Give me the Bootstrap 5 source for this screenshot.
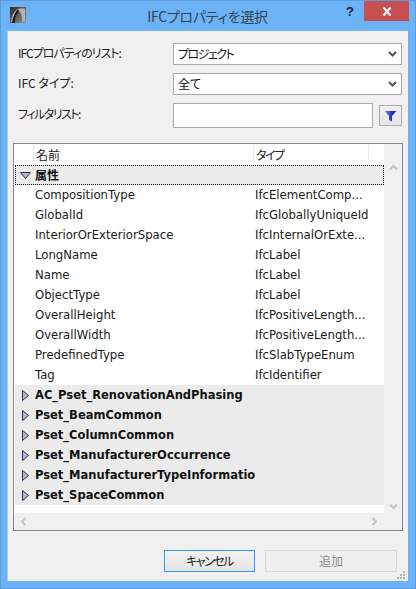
<!DOCTYPE html>
<html lang="ja">
<head>
<meta charset="utf-8">
<title>IFCプロパティを選択</title>
<link rel="stylesheet" href="https://cdn.jsdelivr.net/npm/bootstrap@5.3.0/dist/css/bootstrap.min.css">
<style>
html,body{height:100%;margin:0;overflow:hidden}
body{background:#6bb2f6;font-family:"DejaVu Sans","Noto Sans CJK JP",sans-serif;font-size:11.7px;color:#1a1a1a;line-height:1.2}
.dlg-cjk{font-family:"Noto Sans CJK JP",sans-serif;font-feature-settings:"palt"}
.dlg-kana{letter-spacing:-1.5px}
.dlg-kana1{letter-spacing:-1px}
.dlg-frame{height:589px;width:416px;border:1px solid #5b9bd8;border-top-color:#5d9ddc}
.dlg-title{height:30px;position:relative}
.dlg-logo{margin:6px 0 0 9px;width:16px;height:16px;display:block}
.dlg-name{flex:1;text-align:center;font-size:14px;color:#39424c;padding-top:7px;padding-left:48px;line-height:17px;letter-spacing:-.3px}
.dlg-help{width:18px;font-weight:700;font-size:13px;padding-top:3px;color:#222;font-family:"Liberation Sans",sans-serif;text-align:center;margin-right:5px}
.dlg-close{width:45px;height:20px;background:#c75050;margin-right:6px;display:flex;align-items:center;justify-content:center}
.dlg-client{width:401px;height:550px;margin-left:6px;background:#f0f0f0;border-left:1px solid #a6cdf4;position:relative;padding:12px 6px 0 10px}
.dlg-row{height:22px;margin-bottom:8px}
.dlg-row.tall{height:25px;margin-bottom:15px}
.dlg-label{width:155px;font-size:12px;color:#222;padding-bottom:2px}
.form-select.dlg-sel{width:229px;height:22px;border-radius:0;border:1px solid #a9a9a9;padding:0 20px 0 4px;font-size:12px;color:#111;background-color:#fff;background-position:right 4px center;background-size:9px 7px;background-image:url("data:image/svg+xml,%3Csvg xmlns='http://www.w3.org/2000/svg' viewBox='0 0 9 7'%3E%3Cpath d='M1 1l3.500 3.500L8 1' fill='none' stroke='%23555' stroke-width='2'/%3E%3C/svg%3E")}
.form-control.dlg-input{width:200px;height:25px;border-radius:0;border:1px solid #a9a9a9;padding:0 4px;background:#fff}
.btn.dlg-filter{width:23px;height:21px;margin:0 0 0 6px;padding:0;border-radius:0;border:1px solid #acacac;background:linear-gradient(#f1f1f1,#e6e6e6);display:flex;align-items:center;justify-content:center}
.dlg-panel{width:390px;height:388px;margin-left:-5px;border:1px solid #828790;background:#fff;display:grid;grid-template-columns:370px 18px;grid-template-rows:369px 17px}
.dlg-list{padding:1px 0 0 1px;overflow:hidden}
.dlg-head{height:19px;display:flex;color:#222;margin-bottom:1px;font-size:12px}
.dlg-head span{display:block;padding:2px 0 0 2px;border-right:1px solid #e6ecf5;line-height:15px}
.dlg-h0{width:19px}.dlg-h1{width:220px}.dlg-h2{width:115px}
.dlg-rw{height:20px;display:flex;align-items:center;white-space:nowrap}
.dlg-rw .c0{width:20px;flex:none;display:flex;justify-content:center;padding-left:1px}
.dlg-rw .c1{width:220px;flex:none;overflow:hidden;height:20px;line-height:20px}
.dlg-grp{background:#ebebeb;font-weight:700;color:#111;font-size:11.5px}
.dlg-grp.active-row{outline:1px dotted #111;outline-offset:-1px;font-size:12px}
.dlg-sbv{background:#f0f0f0;display:flex;flex-direction:column;justify-content:space-between;align-items:center;padding:20px 0 3px}
.dlg-sbh{background:#f0f0f0;display:flex;justify-content:space-between;align-items:center;padding:0 6px}
.dlg-corner{background:#f0f0f0}
.dlg-foot{margin-top:19px;margin-left:146px;gap:10px}
.btn.dlg-btn{height:22px;border-radius:0;padding:0;font-size:12px;line-height:20px}
.btn.dlg-cancel{width:91px;border:1px solid #3399ff;background:linear-gradient(#f2f2f2,#e5e5e5);color:#222}
.btn.dlg-add{width:132px;border:1px solid #d9d9d9;background:#efefef;color:#8b8b8b;opacity:1}
.dlg-grip{position:absolute;right:2px;bottom:1px;display:block}
</style>
</head>
<body>
<div class="dlg-frame">
  <div class="dlg-title d-flex align-items-start">
    <svg class="dlg-logo" viewBox="0 0 16 16"><defs><linearGradient id="lg" x1="0" y1="0" x2="1" y2="1"><stop offset="0" stop-color="#2b2b2b"/><stop offset="1" stop-color="#8e8e8e"/></linearGradient></defs><rect width="16" height="16" fill="url(#lg)"/><path d="M9 1.500h6V15h-2.500C12 9 11 5 8.500 4 6 5 4 10 3.500 15H1C2 8 5 3 9 1.500z" fill="#b4b4b4"/><path d="M8 2.500C5 5 3 10 2 16h2.500C5 10 6.500 6 9 3.500z" fill="#111"/></svg>
    <div class="dlg-name dlg-cjk">IFCプロパティを選択</div>
    <div class="dlg-help">?</div>
    <div class="dlg-close"><svg width="10" height="9" viewBox="0 0 10 9"><path d="M1.500.5l7 8M8.500.5l-7 8" stroke="#fff" stroke-width="2"/></svg></div>
  </div>
  <div class="dlg-client">
    <div class="dlg-row d-flex align-items-center"><div class="dlg-label dlg-cjk dlg-kana1">IFCプロパティのリスト:</div><select class="form-select dlg-sel dlg-cjk dlg-kana"><option>プロジェクト</option></select></div>
    <div class="dlg-row d-flex align-items-center"><div class="dlg-label dlg-cjk">IFC タイプ:</div><select class="form-select dlg-sel dlg-cjk"><option>全て</option></select></div>
    <div class="dlg-row tall d-flex align-items-center"><div class="dlg-label dlg-cjk dlg-kana">フィルタリスト:</div><input class="form-control dlg-input" type="text"><button class="btn dlg-filter" type="button"><svg width="13" height="12" viewBox="0 0 13 12"><defs><linearGradient id="fg" x1="0" x2="1"><stop offset="0" stop-color="#8c96e8"/><stop offset=".6" stop-color="#1c2fc4"/><stop offset="1" stop-color="#1a2aa8"/></linearGradient></defs><path d="M.5 1h12L8 6v5.500L5 10V6z" fill="url(#fg)"/></svg></button></div>
    <div class="dlg-panel">
      <div class="dlg-list">
        <div class="dlg-head dlg-cjk"><span class="dlg-h0"></span><span class="dlg-h1">名前</span><span class="dlg-h2 dlg-kana">タイプ</span></div>
        <div class="dlg-rw dlg-grp active-row"><span class="c0"><svg width="11" height="7" viewBox="0 0 11 7"><path d="M.5.5h10L5.500 6.500z" fill="#b5b0ee" stroke="#333"/></svg></span><span class="c1 dlg-cjk">属性</span></div>
        <div class="dlg-rw"><span class="c0"></span><span class="c1">CompositionType</span><span class="c2">IfcElementComp...</span></div>
        <div class="dlg-rw"><span class="c0"></span><span class="c1">GlobalId</span><span class="c2">IfcGloballyUniqueId</span></div>
        <div class="dlg-rw"><span class="c0"></span><span class="c1">InteriorOrExteriorSpace</span><span class="c2">IfcInternalOrExte...</span></div>
        <div class="dlg-rw"><span class="c0"></span><span class="c1">LongName</span><span class="c2">IfcLabel</span></div>
        <div class="dlg-rw"><span class="c0"></span><span class="c1">Name</span><span class="c2">IfcLabel</span></div>
        <div class="dlg-rw"><span class="c0"></span><span class="c1">ObjectType</span><span class="c2">IfcLabel</span></div>
        <div class="dlg-rw"><span class="c0"></span><span class="c1">OverallHeight</span><span class="c2">IfcPositiveLength...</span></div>
        <div class="dlg-rw"><span class="c0"></span><span class="c1">OverallWidth</span><span class="c2">IfcPositiveLength...</span></div>
        <div class="dlg-rw"><span class="c0"></span><span class="c1">PredefinedType</span><span class="c2">IfcSlabTypeEnum</span></div>
        <div class="dlg-rw"><span class="c0"></span><span class="c1">Tag</span><span class="c2">IfcIdentifier</span></div>
        <div class="dlg-rw dlg-grp"><span class="c0"><svg width="7" height="11" viewBox="0 0 7 11"><path d="M.5.5v10l6-5z" fill="#b5b0ee" stroke="#333"/></svg></span><span class="c1">AC_Pset_RenovationAndPhasing</span></div>
        <div class="dlg-rw dlg-grp"><span class="c0"><svg width="7" height="11" viewBox="0 0 7 11"><path d="M.5.5v10l6-5z" fill="#b5b0ee" stroke="#333"/></svg></span><span class="c1">Pset_BeamCommon</span></div>
        <div class="dlg-rw dlg-grp"><span class="c0"><svg width="7" height="11" viewBox="0 0 7 11"><path d="M.5.5v10l6-5z" fill="#b5b0ee" stroke="#333"/></svg></span><span class="c1">Pset_ColumnCommon</span></div>
        <div class="dlg-rw dlg-grp"><span class="c0"><svg width="7" height="11" viewBox="0 0 7 11"><path d="M.5.5v10l6-5z" fill="#b5b0ee" stroke="#333"/></svg></span><span class="c1">Pset_ManufacturerOccurrence</span></div>
        <div class="dlg-rw dlg-grp"><span class="c0"><svg width="7" height="11" viewBox="0 0 7 11"><path d="M.5.5v10l6-5z" fill="#b5b0ee" stroke="#333"/></svg></span><span class="c1">Pset_ManufacturerTypeInformation</span></div>
        <div class="dlg-rw dlg-grp"><span class="c0"><svg width="7" height="11" viewBox="0 0 7 11"><path d="M.5.5v10l6-5z" fill="#b5b0ee" stroke="#333"/></svg></span><span class="c1">Pset_SpaceCommon</span></div>
      </div>
      <div class="dlg-sbv"><svg width="9" height="7" viewBox="0 0 9 7"><path d="M1 5.500l3.500-3.500L8 5.500" fill="none" stroke="#c4c4c4" stroke-width="2"/></svg><svg width="9" height="7" viewBox="0 0 9 7"><path d="M1 1.500L4.500 5 8 1.500" fill="none" stroke="#c4c4c4" stroke-width="2"/></svg></div>
      <div class="dlg-sbh"><svg width="7" height="9" viewBox="0 0 7 9"><path d="M5.500 1L2 4.500 5.500 8" fill="none" stroke="#c4c4c4" stroke-width="2"/></svg><svg width="7" height="9" viewBox="0 0 7 9"><path d="M1.500 1L5 4.500 1.500 8" fill="none" stroke="#c4c4c4" stroke-width="2"/></svg></div>
      <div class="dlg-corner"></div>
    </div>
    <div class="dlg-foot d-flex">
      <button class="btn dlg-btn dlg-cancel dlg-cjk dlg-kana" type="button">キャンセル</button>
      <button class="btn dlg-btn dlg-add dlg-cjk" type="button" disabled>追加</button>
    </div>
    <svg class="dlg-grip" width="9" height="9" viewBox="0 0 9 9" fill="#b4b4b4"><rect x="6" y="0" width="2" height="2"/><rect x="3" y="3" width="2" height="2"/><rect x="6" y="3" width="2" height="2"/><rect x="0" y="6" width="2" height="2"/><rect x="3" y="6" width="2" height="2"/><rect x="6" y="6" width="2" height="2"/></svg>
  </div>
</div>
</body>
</html>
